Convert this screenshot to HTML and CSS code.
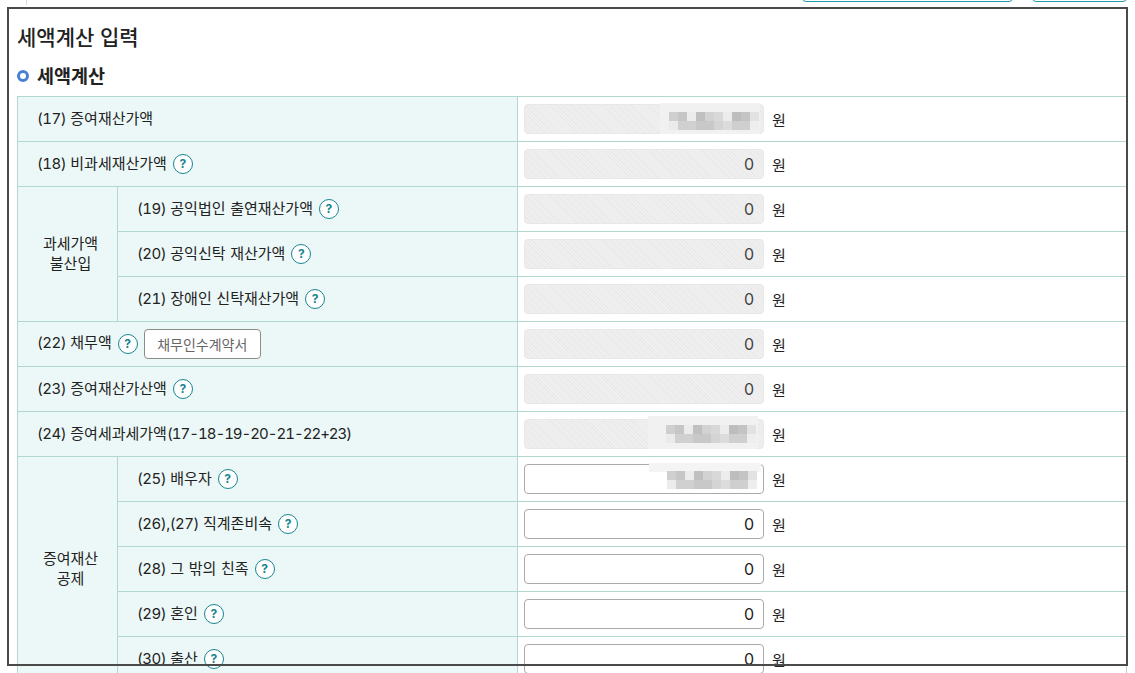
FILE: index.html
```html
<!DOCTYPE html>
<html lang="ko">
<head>
<meta charset="utf-8">
<title>세액계산 입력</title>
<link rel="stylesheet" href="styles.css">
</head>
<body>
<div class="topbar">
  <span class="tick"></span>
  <span class="topbtn wide"></span>
  <span class="topbtn narrow"></span>
</div>
<main class="panel">
  <h1 class="title">세액계산 입력</h1>
  <h2 class="section"><span class="bullet"></span>세액계산</h2>
  <table class="grid">
    <colgroup><col class="c1"><col class="c2"><col class="c3"></colgroup>
    <tbody>
      <tr>
        <th colspan="2"><span class="num">(17) </span>증여재산가액</th>
        <td><span class="field"><input class="amt ro" readonly value=""><span class="patch p17"></span><span class="mosaic m17"></span></span><span class="won">원</span></td>
      </tr>
      <tr>
        <th colspan="2"><span class="num">(18) </span>비과세재산가액<span class="help">?</span></th>
        <td><span class="field"><input class="amt ro" readonly value="0"></span><span class="won">원</span></td>
      </tr>
      <tr>
        <th rowspan="3" class="group">과세가액<br>불산입</th>
        <th><span class="num">(19) </span>공익법인 출연재산가액<span class="help">?</span></th>
        <td><span class="field"><input class="amt ro" readonly value="0"></span><span class="won">원</span></td>
      </tr>
      <tr>
        <th><span class="num">(20) </span>공익신탁 재산가액<span class="help">?</span></th>
        <td><span class="field"><input class="amt ro" readonly value="0"></span><span class="won">원</span></td>
      </tr>
      <tr>
        <th><span class="num">(21) </span>장애인 신탁재산가액<span class="help">?</span></th>
        <td><span class="field"><input class="amt ro" readonly value="0"></span><span class="won">원</span></td>
      </tr>
      <tr>
        <th colspan="2"><span class="num">(22) </span>채무액<span class="help">?</span><button class="doc" type="button">채무인수계약서</button></th>
        <td><span class="field"><input class="amt ro" readonly value="0"></span><span class="won">원</span></td>
      </tr>
      <tr>
        <th colspan="2"><span class="num">(23) </span>증여재산가산액<span class="help">?</span></th>
        <td><span class="field"><input class="amt ro" readonly value="0"></span><span class="won">원</span></td>
      </tr>
      <tr>
        <th colspan="2"><span class="num">(24) </span>증여세과세가액<span class="expr">(17-18-19-20-21-22+23)</span></th>
        <td><span class="field"><input class="amt ro" readonly value=""><span class="patch p24"></span><span class="mosaic m24"></span></span><span class="won">원</span></td>
      </tr>
      <tr>
        <th rowspan="5" class="group">증여재산<br>공제</th>
        <th><span class="num">(25) </span>배우자<span class="help">?</span></th>
        <td><span class="field"><input class="amt" value=""><span class="patch p25"></span><span class="mosaic m25"></span></span><span class="won">원</span></td>
      </tr>
      <tr>
        <th><span class="num">(26),(27) </span>직계존비속<span class="help">?</span></th>
        <td><span class="field"><input class="amt" value="0"></span><span class="won">원</span></td>
      </tr>
      <tr>
        <th><span class="num">(28) </span>그 밖의 친족<span class="help">?</span></th>
        <td><span class="field"><input class="amt" value="0"></span><span class="won">원</span></td>
      </tr>
      <tr>
        <th><span class="num">(29) </span>혼인<span class="help">?</span></th>
        <td><span class="field"><input class="amt" value="0"></span><span class="won">원</span></td>
      </tr>
      <tr>
        <th><span class="num">(30) </span>출산<span class="help">?</span></th>
        <td><span class="field"><input class="amt" value="0"></span><span class="won">원</span></td>
      </tr>
    </tbody>
  </table>
</main>
<div class="frame"></div>
</body>
</html>
```
FILE: styles.css
```css
html, body {
  margin: 0;
  height: 673px;
  overflow: hidden;
  background: #fff;
}
body {
  position: relative;
  font-family: Inter, "Noto Sans CJK KR", sans-serif;
  font-variant-numeric: tabular-nums;
  color: #222;
}
.topbar {
  height: 2px;
  display: flex;
  justify-content: flex-end;
  align-items: flex-end;
  gap: 19px;
  padding-right: 8px;
}
.tick {
  align-self: flex-start;
  width: 1px;
  height: 5px;
  margin-left: 26px;
  margin-right: auto;
  background: #ddd;
  flex: none;
}
.topbtn {
  flex: none;
  height: 30px;
  box-sizing: border-box;
  border: 1px solid #1f9aa8;
  border-radius: 4px;
}
.wide { width: 211px; }
.narrow { width: 95px; }
.panel {
  padding-left: 17px;
}
.title {
  margin: 0;
  padding-top: 21px;
  height: 30px;
  line-height: 30px;
  font-size: 21px;
  font-weight: 500;
  color: #222;
}
.section {
  margin: 0;
  padding-top: 8px;
  height: 35px;
  line-height: 30px;
  font-size: 18.5px;
  font-weight: 600;
  display: flex;
  align-items: flex-start;
}
.bullet {
  width: 12px;
  height: 12px;
  box-sizing: border-box;
  border: 3.5px solid #4a7fd4;
  border-radius: 50%;
  margin: 9px 8px 0 0;
  background: #fff;
  flex: none;
}
.grid {
  border-collapse: collapse;
  table-layout: fixed;
  width: 1110px;
}
.c1 { width: 100px; }
.c2 { width: 400px; }
.grid th, .grid td {
  height: 45px;
  box-sizing: border-box;
  padding: 0;
  border: 1px solid #b2d6d0;
  font-size: 15px;
  font-weight: 400;
  line-height: 20px;
}
.grid th {
  background: #ecf8f7;
  text-align: left;
  padding-left: 19px;
  color: #222;
  word-spacing: 0.6px;
}
.num {
  letter-spacing: -0.5px;
  white-space: pre;
}
.expr {
  letter-spacing: -1px;
}
.grid th.group {
  text-align: center;
  padding-left: 6px;
  line-height: 20px;
}
.grid td {
  background: #fff;
  padding-left: 6px;
  white-space: nowrap;
}
.field {
  position: relative;
  display: inline-block;
  width: 240px;
  height: 30px;
  vertical-align: middle;
}
.amt {
  display: block;
  width: 240px;
  height: 30px;
  box-sizing: border-box;
  border: 1px solid #aaa;
  border-radius: 4px;
  padding: 0 9px;
  text-align: right;
  font: 400 16px Inter, sans-serif;
  color: #222;
  background: #fff;
}
.amt.ro {
  border-color: #e8e8e8;
  color: #444;
  background: repeating-linear-gradient(45deg, #f0f0f0 0, #f0f0f0 1.5px, #e9e9e9 1.5px, #e9e9e9 2.5px);
}
.won {
  display: inline-block;
  padding-top: 4px;
  margin-left: 8px;
  vertical-align: middle;
  font-size: 15px;
  color: #222;
}
.help {
  display: inline-block;
  width: 20px;
  height: 20px;
  box-sizing: border-box;
  border: 1.5px solid #17858f;
  border-radius: 50%;
  margin-left: 6px;
  text-align: center;
  font: 700 12px/17px Inter, sans-serif;
  color: #17858f;
  vertical-align: middle;
  background: #fff;
}
.doc {
  width: 117px;
  height: 30px;
  margin-left: 6px;
  padding: 0;
  border: 1px solid #8c8c8c;
  border-radius: 4px;
  background: #fff;
  font: 400 14px "Noto Sans CJK KR", sans-serif;
  color: #666;
  vertical-align: middle;
}
.patch {
  position: absolute;
  pointer-events: none;
  background: #f1f1f1;
}
.p17 { left: 136px; top: -1px; width: 100px; height: 31px; }
.p24 { left: 124px; top: -3px; width: 110px; height: 33px; }
.p25 { left: 125px; top: -1px; width: 112px; height: 9px; background: #f4f4f4; }
.mosaic {
  position: absolute;
  width: 90px;
  height: 18px;
  filter: blur(0.4px);
  background:
    linear-gradient(90deg, #cfcfcf 0 9px, #c6c6c6 9px 18px, #ececec 18px 27px, #c0c0c0 27px 36px, #d2d2d2 36px 45px, #d8d8d8 45px 54px, #ececec 54px 63px, #bdbdbd 63px 72px, #c4c4c4 72px 81px, #e2e2e2 81px 90px) 0 0 / 90px 9px no-repeat,
    linear-gradient(90deg, #ebebeb 0 9px, #d0d0d0 9px 27px, #c8c8c8 27px 45px, #d4d4d4 45px 54px, #dcdcdc 54px 63px, #cfcfcf 63px 81px, #eeeeee 81px 90px) 0 9px / 90px 9px no-repeat;
}
.m17 { left: 145px; top: 8px; }
.m24 { left: 142px; top: 6px; }
.m25 { left: 143px; top: 7px; }
.frame {
  position: absolute;
  left: 7px;
  top: 7px;
  width: 1121px;
  height: 659px;
  box-sizing: border-box;
  border: 2px solid #4a4a4a;
  pointer-events: none;
}
```
